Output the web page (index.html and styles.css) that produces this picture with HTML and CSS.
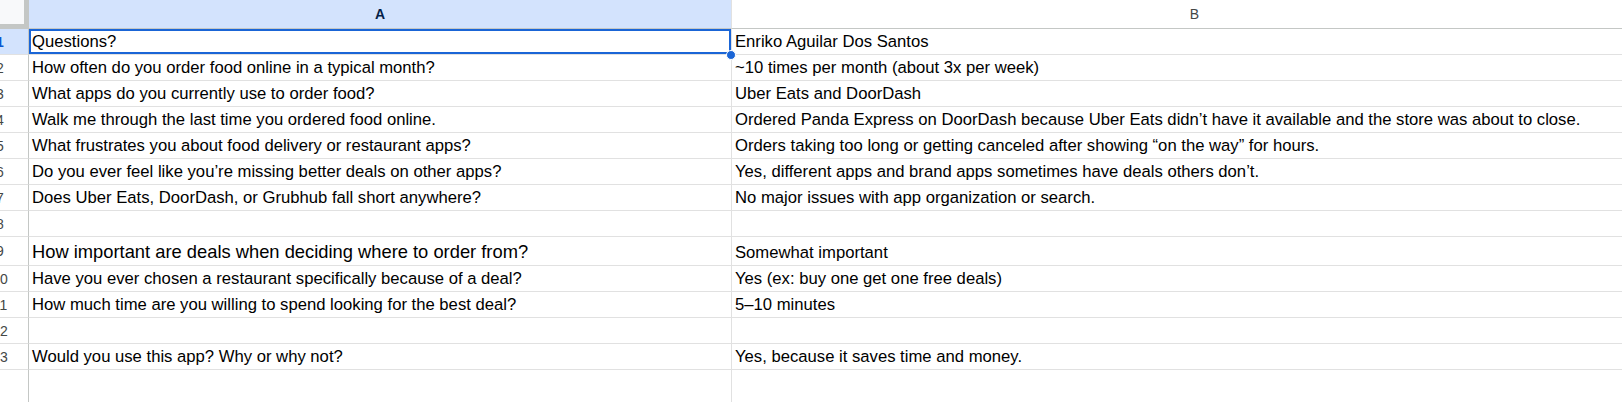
FILE: index.html
```html
<!DOCTYPE html>
<html>
<head>
<meta charset="utf-8">
<link rel="stylesheet" href="styles.css">
</head>
<body>
<div class="sheet">
  <div class="row hdr">
    <div class="rh corner"></div>
    <div class="ch a sel">A</div>
    <div class="ch b">B</div>
  </div>
  <div class="row">
    <div class="rh active"><span>1</span></div>
    <div class="c a cur">Questions?<div class="selbox"></div><div class="handle"></div></div>
    <div class="c b">Enriko Aguilar Dos Santos</div>
  </div>
  <div class="row">
    <div class="rh"><span>2</span></div>
    <div class="c a">How often do you order food online in a typical month?</div>
    <div class="c b">~10 times per month (about 3x per week)</div>
  </div>
  <div class="row">
    <div class="rh"><span>3</span></div>
    <div class="c a">What apps do you currently use to order food?</div>
    <div class="c b">Uber Eats and DoorDash</div>
  </div>
  <div class="row">
    <div class="rh"><span>4</span></div>
    <div class="c a">Walk me through the last time you ordered food online.</div>
    <div class="c b">Ordered Panda Express on DoorDash because Uber Eats didn’t have it available and the store was about to close.</div>
  </div>
  <div class="row">
    <div class="rh"><span>5</span></div>
    <div class="c a">What frustrates you about food delivery or restaurant apps?</div>
    <div class="c b">Orders taking too long or getting canceled after showing “on the way” for hours.</div>
  </div>
  <div class="row">
    <div class="rh"><span>6</span></div>
    <div class="c a">Do you ever feel like you’re missing better deals on other apps?</div>
    <div class="c b">Yes, different apps and brand apps sometimes have deals others don’t.</div>
  </div>
  <div class="row">
    <div class="rh"><span>7</span></div>
    <div class="c a">Does Uber Eats, DoorDash, or Grubhub fall short anywhere?</div>
    <div class="c b">No major issues with app organization or search.</div>
  </div>
  <div class="row">
    <div class="rh"><span>8</span></div>
    <div class="c a"></div>
    <div class="c b"></div>
  </div>
  <div class="row tall">
    <div class="rh"><span>9</span></div>
    <div class="c a big">How important are deals when deciding where to order from?</div>
    <div class="c b">Somewhat important</div>
  </div>
  <div class="row">
    <div class="rh"><span>10</span></div>
    <div class="c a">Have you ever chosen a restaurant specifically because of a deal?</div>
    <div class="c b">Yes (ex: buy one get one free deals)</div>
  </div>
  <div class="row">
    <div class="rh"><span>11</span></div>
    <div class="c a">How much time are you willing to spend looking for the best deal?</div>
    <div class="c b">5–10 minutes</div>
  </div>
  <div class="row">
    <div class="rh"><span>12</span></div>
    <div class="c a"></div>
    <div class="c b"></div>
  </div>
  <div class="row">
    <div class="rh"><span>13</span></div>
    <div class="c a">Would you use this app? Why or why not?</div>
    <div class="c b">Yes, because it saves time and money.</div>
  </div>
  <div class="row filler">
    <div class="rh"></div>
    <div class="c a"></div>
    <div class="c b"></div>
  </div>
</div>
</body>
</html>
```

FILE: styles.css
```css
html, body {
  margin: 0;
  padding: 0;
  background: #ffffff;
  overflow: hidden;
}

.sheet {
  width: 1622px;
  height: 402px;
  overflow: hidden;
  display: flex;
  flex-direction: column;
  font-family: "Liberation Sans", Arial, sans-serif;
}

.row {
  display: flex;
  flex: none;
  height: 26px;
}

.row.tall {
  height: 29px;
}

.row.hdr {
  height: 29px;
}

.row.filler {
  flex: 1 1 auto;
}

.rh {
  flex: none;
  width: 29px;
  box-sizing: border-box;
  border-right: 1px solid #c4c7c5;
  border-bottom: 1px solid #e1e1e1;
  overflow: hidden;
  display: flex;
  align-items: center;
  background: #ffffff;
}

.rh span {
  flex: none;
  width: 58px;
  margin-left: -29px;
  text-align: center;
  font-size: 14px;
  color: #444746;
}

.rh.active {
  background: #d3e3fd;
}

.rh.active span {
  color: #0b57d0;
  font-weight: bold;
}

.rh.corner {
  background: #f8f9fa;
  box-shadow: inset -4px -4px 0 #c4c7c5;
  border-bottom: 1px solid #c4c7c5;
}

.filler .rh,
.filler .c {
  border-bottom: none;
}

.ch {
  flex: none;
  box-sizing: border-box;
  border-right: 1px solid #e1e1e1;
  border-bottom: 1px solid #c4c7c5;
  display: flex;
  align-items: center;
  justify-content: center;
  font-size: 14px;
  color: #444746;
}

.ch.sel {
  background: #d3e3fd;
  color: #041e49;
  font-weight: bold;
}

.a {
  width: 703px;
}

.b {
  width: 926px;
}

.c {
  flex: none;
  box-sizing: border-box;
  border-right: 1px solid #e1e1e1;
  border-bottom: 1px solid #e1e1e1;
  padding: 0 3px 2px 3px;
  display: flex;
  align-items: flex-end;
  white-space: nowrap;
  overflow: hidden;
  font-size: 16.67px;
  color: #000000;
}

.c.big {
  font-size: 18.33px;
}

.c.cur {
  position: relative;
  overflow: visible;
  z-index: 2;
}

.selbox {
  position: absolute;
  left: 0;
  top: 0;
  right: 0;
  bottom: 0;
  border: 2px solid #1a65d6;
  pointer-events: none;
}

.handle {
  position: absolute;
  right: -5px;
  bottom: -6px;
  width: 10px;
  height: 10px;
  box-sizing: border-box;
  border-radius: 50%;
  background: #1a65d6;
  border: 1px solid #ffffff;
}
```
